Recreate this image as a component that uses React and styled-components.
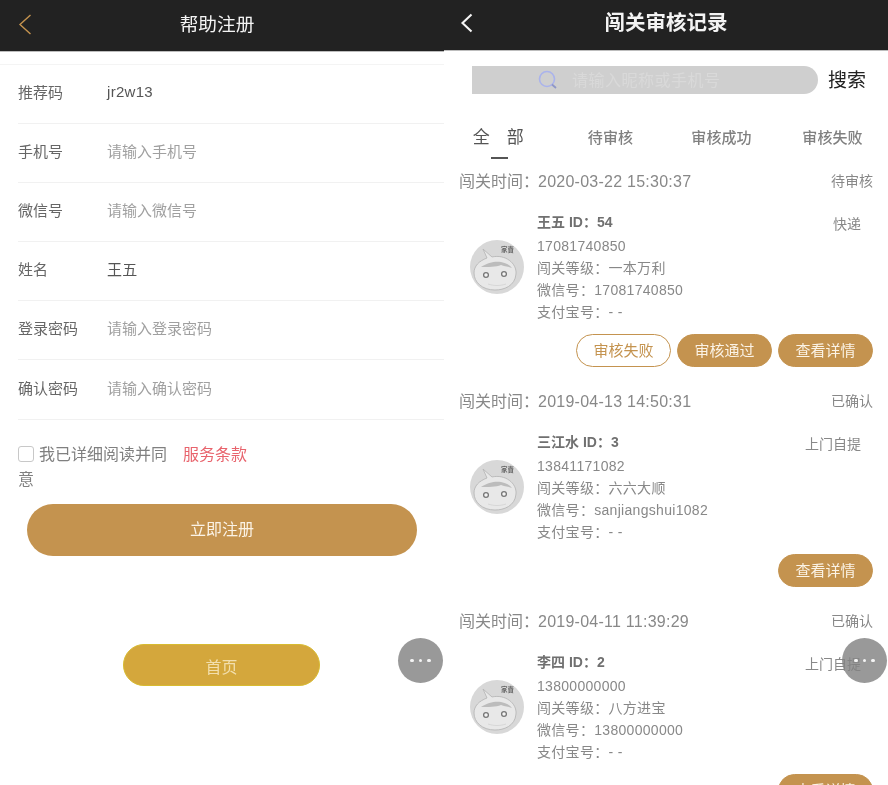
import React from 'react';
import styled, { createGlobalStyle } from 'styled-components';

const Global = createGlobalStyle`
  html, body { margin: 0; padding: 0; background: #fff; }
  body { font-family: "Liberation Sans", "Noto Sans CJK SC", sans-serif; }
  * { box-sizing: border-box; }
`;

const Page = styled.div`
  display: flex;
  width: 888px;
  height: 785px;
  overflow: hidden;
  background: #fff;
  filter: blur(0.35px);
`;

const Panel = styled.section`
  position: relative;
  flex: 0 0 444px;
  width: 444px;
  height: 785px;
  overflow: hidden;
`;

const Header = styled.header`
  display: flex;
  align-items: center;
  justify-content: center;
  position: relative;
  height: ${p => p.$h}px;
  padding-bottom: ${p => p.$lift}px;
  background: #222;
  border-bottom: 1px solid #bdbdbd;
`;

const HeaderTitle = styled.h1`
  margin: 0;
  color: #f4f4f4;
  font-size: ${p => p.$size}px;
  font-weight: ${p => p.$weight};
  line-height: 1;
  transform: translateX(${p => p.$shift}px);
`;

const BackIcon = styled.svg`
  position: absolute;
  left: ${p => p.$left}px;
  top: ${p => p.$top}px;
`;

const Form = styled.div`
  margin-top: 12px;
  border-top: 1px solid #f4f4f4;
`;

const FormRow = styled.div`
  display: flex;
  align-items: center;
  height: 59.1px;
  margin-left: 18px;
  padding-bottom: 5px;
  border-bottom: 1px solid #f1f1f1;
  font-size: 15px;
`;

const FormLabel = styled.span`
  flex: 0 0 90px;
  color: #666;
`;

const FormValue = styled.span`
  color: ${p => (p.$filled ? '#555' : '#a0a0a0')};
  margin-left: -1px;
  font-size: 15px;
  letter-spacing: ${p => (p.$filled ? '0.3px' : '0')};
`;

const Agreement = styled.div`
  display: flex;
  margin: 22px 0 0 18px;
  font-size: 16px;
  line-height: 25px;
`;

const AgreeText = styled.div`
  width: 152px;
  color: #808080;
`;

const Checkbox = styled.span`
  display: inline-block;
  width: 16px;
  height: 16px;
  margin-right: 5px;
  vertical-align: -2px;
  border: 1px solid #c8c8c8;
  border-radius: 3px;
  background: #fff;
`;

const TermsLink = styled.span`
  margin-left: 13px;
  color: #e8636c;
`;

const MainButton = styled.button`
  display: block;
  width: 390px;
  height: 52px;
  margin: 12px 0 0 27px;
  padding: 0 0 3px;
  border: 0;
  border-radius: 26px;
  background: #c4934f;
  color: #fbf3e6;
  font: inherit;
  font-size: 16px;
`;

const HomeButton = styled.button`
  display: block;
  width: 197px;
  height: 42px;
  margin: 88px 0 0 123px;
  padding: 2px 0 0;
  border: 1px solid #d8bb30;
  border-radius: 21px;
  background: #d4a73c;
  color: #f2dfae;
  font: inherit;
  font-size: 16px;
`;

const FloatingMenu = styled.div`
  position: absolute;
  top: 638px;
  right: ${p => p.$right}px;
  display: flex;
  align-items: center;
  justify-content: center;
  gap: 5px;
  width: 45px;
  height: 45px;
  border-radius: 50%;
  background: rgba(130, 130, 130, 0.82);
`;

const Dot = styled.i`
  width: 3.5px;
  height: 3.5px;
  border-radius: 50%;
  background: #f4f4f4;
`;

const SearchRow = styled.div`
  display: flex;
  align-items: center;
  height: 28px;
  margin: 15px 0 0 28px;
`;

const SearchBox = styled.div`
  display: flex;
  align-items: center;
  gap: 14px;
  width: 346px;
  height: 28px;
  padding: 0 0 3px 66px;
  border-radius: 0 14px 14px 0 / 0 14px 14px 0;
  background: #cfcfcf;
  color: #d9d9d9;
  font-size: 16px;
  letter-spacing: 0.5px;
  white-space: nowrap;
`;

const SearchGlass = styled.svg`
  margin-top: 3px;
`;

const SearchLabel = styled.span`
  margin: 0 0 4px 10px;
  color: #222;
  font-size: 19px;
`;

const Tabs = styled.nav`
  display: grid;
  grid-template-columns: repeat(4, 1fr);
  margin-top: 33px;
`;

const Tab = styled.div`
  display: flex;
  flex-direction: column;
  align-items: center;
  color: ${p => (p.$active ? '#555' : '#808080')};
  font-size: ${p => (p.$active ? 17 : 15)}px;
  font-weight: ${p => (p.$active ? 400 : 500)};
  letter-spacing: ${p => (p.$active ? '2.5px' : '0.1px')};
  line-height: 22px;
  white-space: pre;
`;

const TabBar = styled.span`
  width: 17px;
  height: 2px;
  margin-top: 8px;
  background: ${p => (p.$active ? '#555' : 'transparent')};
`;

const Records = styled.div`
  margin-top: 11px;
`;

const Record = styled.article`
  margin-bottom: 23px;
`;

const RecordTop = styled.div`
  display: flex;
  align-items: center;
  justify-content: space-between;
  height: 22px;
  padding: 0 15px 2px;
`;

const RecordTime = styled.span`
  color: #888;
  font-size: 16px;
  white-space: nowrap;
`;

const DateText = styled.span`
  margin-left: -1px;
  letter-spacing: 0.25px;
`;

const RecordStatus = styled.span`
  color: #888;
  font-size: 14px;
`;

const RecordBody = styled.div`
  display: flex;
  margin-top: 19px;
  padding: 0 27px 0 26px;
`;

const Avatar = styled.svg`
  flex: 0 0 54px;
  align-self: center;
  margin-right: 13px;
`;

const Info = styled.div`
  flex: 1;
`;

const Name = styled.div`
  margin-bottom: 2px;
  color: #707070;
  font-size: 14px;
  font-weight: 700;
  line-height: 22px;
`;

const InfoLine = styled.div`
  color: #888;
  font-size: 14px;
  letter-spacing: 0.3px;
  line-height: 22px;
  white-space: nowrap;
`;

const Delivery = styled.span`
  margin-top: 2px;
  color: #888;
  font-size: 14px;
  line-height: 22px;
`;

const Actions = styled.div`
  display: flex;
  justify-content: flex-end;
  gap: 6px;
  margin-top: 11px;
  padding-right: 15px;
`;

const ActionButton = styled.button`
  width: 95px;
  height: 33px;
  padding: 0 0 3px;
  border: 1px solid #c4934f;
  border-radius: 17px;
  background: ${p => (p.$outline ? '#fff' : '#c4934f')};
  color: ${p => (p.$outline ? '#c4934f' : '#fbf3e6')};
  font: inherit;
  font-size: 15px;
`;

const AvatarArt = () => (
  <Avatar width="54" height="54" viewBox="0 0 54 54">
    <circle cx="27" cy="27" r="27" fill="#d8d8d8" />
    <path d="M13 9 L22 17 C35 14 47 23 46 34 C45 46 34 50 25 50 C12 50 4 42 4 33 C4 26 9 21 17 18 Z" fill="#e8e8e8" stroke="#b2b2b2" strokeWidth="0.8" />
    <path d="M11 27 C18 22 26 21 31 22 C36 23 40 25 42 28 C38 26 35 27 31 25 C26 27 18 27 11 27 Z" fill="#bcbcbc" />
    <circle cx="16" cy="35" r="2.4" fill="#f4f4f4" stroke="#777" strokeWidth="1.3" />
    <circle cx="34" cy="34" r="2.4" fill="#f4f4f4" stroke="#777" strokeWidth="1.3" />
    <path d="M18 44 C24 46 30 46 36 44" fill="none" stroke="#d2d2d2" strokeWidth="0.8" />
    <text x="31" y="12" fontSize="6.5" fontWeight="700" fill="#666">家賣</text>
  </Avatar>
);

const records = [
  {
    time: '2020-03-22 15:30:37', status: '待审核', name: '王五 ID：54', phone: '17081740850',
    level: '一本万利', wechat: '17081740850', delivery: '快递', review: true,
  },
  {
    time: '2019-04-13 14:50:31', status: '已确认', name: '三江水 ID：3', phone: '13841171082',
    level: '六六大顺', wechat: 'sanjiangshui1082', delivery: '上门自提',
  },
  {
    time: '2019-04-11 11:39:29', status: '已确认', name: '李四 ID：2', phone: '13800000000',
    level: '八方进宝', wechat: '13800000000', delivery: '上门自提',
  },
];

const fields = [
  ['推荐码', 'jr2w13', true],
  ['手机号', '请输入手机号'],
  ['微信号', '请输入微信号'],
  ['姓名', '王五', true],
  ['登录密码', '请输入登录密码'],
  ['确认密码', '请输入确认密码'],
];

const Menu = ({ right }) => (
  <FloatingMenu $right={right}>
    <Dot /><Dot /><Dot />
  </FloatingMenu>
);

export default function App() {
  return (
    <Page>
      <Global />
      <Panel>
        <Header $h={52} $lift={1}>
          <BackIcon $left={17} $top={13} width="16" height="23" viewBox="0 0 16 23">
            <path d="M13.5 2 L3 11.5 L13.5 21" fill="none" stroke="#c4934f" strokeWidth="1.4" />
          </BackIcon>
          <HeaderTitle $size={18.7} $weight={400} $shift={-5}>帮助注册</HeaderTitle>
        </Header>
        <Form>
          {fields.map(([label, value, filled]) => (
            <FormRow key={label}>
              <FormLabel>{label}</FormLabel>
              <FormValue $filled={filled}>{value}</FormValue>
            </FormRow>
          ))}
        </Form>
        <Agreement>
          <AgreeText><Checkbox />我已详细阅读并同意</AgreeText>
          <TermsLink>服务条款</TermsLink>
        </Agreement>
        <MainButton>立即注册</MainButton>
        <HomeButton>首页</HomeButton>
        <Menu right={1} />
      </Panel>
      <Panel>
        <Header $h={51} $lift={4}>
          <BackIcon $left={15} $top={12} width="16" height="22" viewBox="0 0 16 22">
            <path d="M12.5 2.5 L3.5 11 L12.5 19.5" fill="none" stroke="#f4f4f4" strokeWidth="2.1" />
          </BackIcon>
          <HeaderTitle $size={20.5} $weight={700} $shift={0}>闯关审核记录</HeaderTitle>
        </Header>
        <SearchRow>
          <SearchBox>
            <SearchGlass width="20" height="20" viewBox="0 0 20 20">
              <circle cx="9" cy="9" r="7.5" fill="none" stroke="#aab3ec" strokeWidth="1.6" />
              <path d="M14 14.5 L18 18" stroke="#8f97c8" strokeWidth="1.8" />
            </SearchGlass>
            <span>请输入昵称或手机号</span>
          </SearchBox>
          <SearchLabel>搜索</SearchLabel>
        </SearchRow>
        <Tabs>
          <Tab $active>全  部<TabBar $active /></Tab>
          <Tab>待审核<TabBar /></Tab>
          <Tab>审核成功<TabBar /></Tab>
          <Tab>审核失败<TabBar /></Tab>
        </Tabs>
        <Records>
          {records.map(r => (
            <Record key={r.time}>
              <RecordTop>
                <RecordTime>闯关时间：<DateText>{r.time}</DateText></RecordTime>
                <RecordStatus>{r.status}</RecordStatus>
              </RecordTop>
              <RecordBody>
                <AvatarArt />
                <Info>
                  <Name>{r.name}</Name>
                  <InfoLine>{r.phone}</InfoLine>
                  <InfoLine>闯关等级：{r.level}</InfoLine>
                  <InfoLine>微信号：{r.wechat}</InfoLine>
                  <InfoLine>支付宝号：- -</InfoLine>
                </Info>
                <Delivery>{r.delivery}</Delivery>
              </RecordBody>
              <Actions>
                {r.review && <ActionButton $outline>审核失败</ActionButton>}
                {r.review && <ActionButton>审核通过</ActionButton>}
                <ActionButton>查看详情</ActionButton>
              </Actions>
            </Record>
          ))}
        </Records>
        <Menu right={1} />
      </Panel>
    </Page>
  );
}
